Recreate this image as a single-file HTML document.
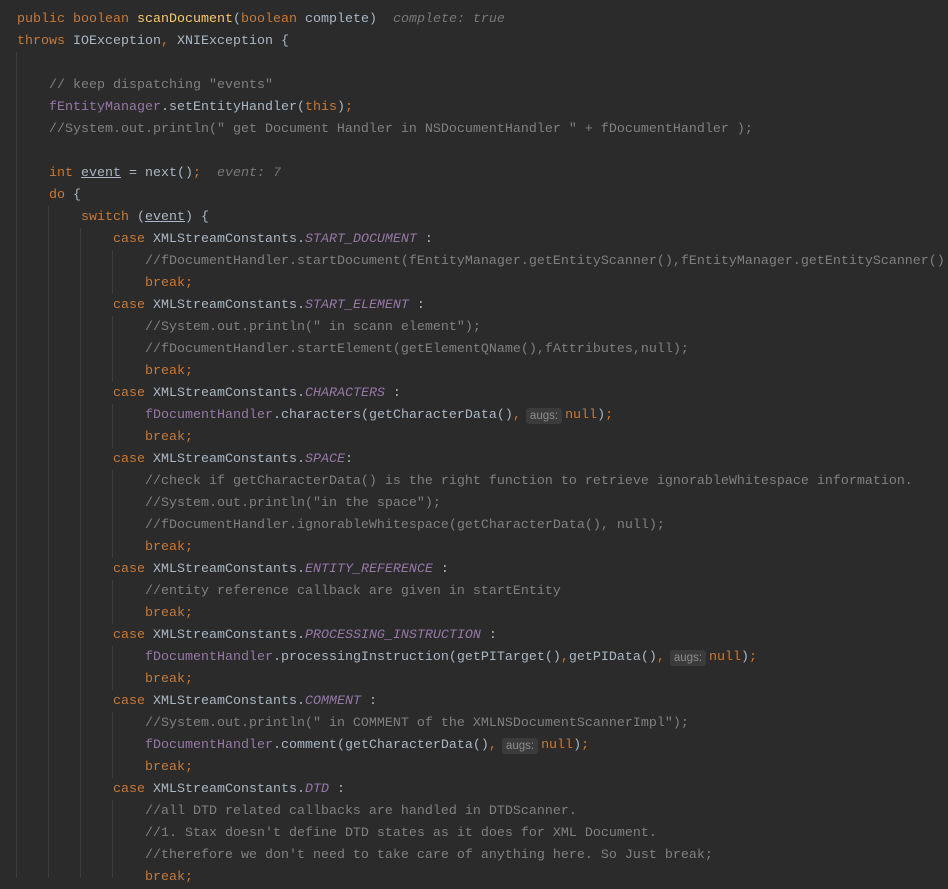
<!DOCTYPE html>
<html><head><meta charset="utf-8"><style>
html,body{margin:0;padding:0;background:#2b2b2b;width:948px;height:878px;overflow:hidden}
#c{position:absolute;left:17px;top:9px;font-family:"Liberation Mono",monospace;font-size:13.33px;line-height:22px;color:#a9b7c6;white-space:pre}
.k{color:#cc7832}.m{color:#ffc66d}.f{color:#9876aa}.fi{color:#9876aa;font-style:italic}.c{color:#808080}
.h{color:#787878;font-style:italic}.u{text-decoration:underline}
.a{display:inline-block;line-height:16px;height:16px;vertical-align:top;margin-top:3px;background:#3b3b3b;color:#8c8c8c;font-family:"Liberation Sans",sans-serif;font-size:11.5px;border-radius:3px;padding:0 4px;margin-left:5px;margin-right:3px}
.g{position:absolute;width:1px;background:#3c3c3c}
</style></head><body>
<div class="g" style="left:16px;top:52px;height:826px"></div>
<div class="g" style="left:48px;top:206px;height:672px"></div>
<div class="g" style="left:80px;top:228px;height:650px"></div>
<div class="g" style="left:112px;top:250px;height:44px"></div>
<div class="g" style="left:112px;top:316px;height:66px"></div>
<div class="g" style="left:112px;top:404px;height:44px"></div>
<div class="g" style="left:112px;top:470px;height:88px"></div>
<div class="g" style="left:112px;top:580px;height:44px"></div>
<div class="g" style="left:112px;top:646px;height:44px"></div>
<div class="g" style="left:112px;top:712px;height:66px"></div>
<div class="g" style="left:112px;top:800px;height:78px"></div>
<div id="c"><span class="k">public boolean </span><span class="m">scanDocument</span>(<span class="k">boolean </span>complete)  <span class="h">complete: true</span>
<span class="k">throws </span>IOException<span class="k">, </span>XNIException {

    <span class="c">// keep dispatching "events"</span>
    <span class="f">fEntityManager</span>.setEntityHandler(<span class="k">this</span>)<span class="k">;</span>
    <span class="c">//System.out.println(" get Document Handler in NSDocumentHandler " + fDocumentHandler );</span>

    <span class="k">int </span><span class="u">event</span> = next()<span class="k">;</span>  <span class="h">event: 7</span>
    <span class="k">do </span>{
        <span class="k">switch </span>(<span class="u">event</span>) {
            <span class="k">case </span>XMLStreamConstants.<span class="fi">START_DOCUMENT</span> :
                <span class="c">//fDocumentHandler.startDocument(fEntityManager.getEntityScanner(),fEntityManager.getEntityScanner().</span>
                <span class="k">break;</span>
            <span class="k">case </span>XMLStreamConstants.<span class="fi">START_ELEMENT</span> :
                <span class="c">//System.out.println(" in scann element");</span>
                <span class="c">//fDocumentHandler.startElement(getElementQName(),fAttributes,null);</span>
                <span class="k">break;</span>
            <span class="k">case </span>XMLStreamConstants.<span class="fi">CHARACTERS</span> :
                <span class="f">fDocumentHandler</span>.characters(getCharacterData()<span class="k">,</span><span class="a">augs:</span><span class="k">null</span>)<span class="k">;</span>
                <span class="k">break;</span>
            <span class="k">case </span>XMLStreamConstants.<span class="fi">SPACE</span>:
                <span class="c">//check if getCharacterData() is the right function to retrieve ignorableWhitespace information.</span>
                <span class="c">//System.out.println("in the space");</span>
                <span class="c">//fDocumentHandler.ignorableWhitespace(getCharacterData(), null);</span>
                <span class="k">break;</span>
            <span class="k">case </span>XMLStreamConstants.<span class="fi">ENTITY_REFERENCE</span> :
                <span class="c">//entity reference callback are given in startEntity</span>
                <span class="k">break;</span>
            <span class="k">case </span>XMLStreamConstants.<span class="fi">PROCESSING_INSTRUCTION</span> :
                <span class="f">fDocumentHandler</span>.processingInstruction(getPITarget()<span class="k">,</span>getPIData()<span class="k">,</span><span class="a">augs:</span><span class="k">null</span>)<span class="k">;</span>
                <span class="k">break;</span>
            <span class="k">case </span>XMLStreamConstants.<span class="fi">COMMENT</span> :
                <span class="c">//System.out.println(" in COMMENT of the XMLNSDocumentScannerImpl");</span>
                <span class="f">fDocumentHandler</span>.comment(getCharacterData()<span class="k">,</span><span class="a">augs:</span><span class="k">null</span>)<span class="k">;</span>
                <span class="k">break;</span>
            <span class="k">case </span>XMLStreamConstants.<span class="fi">DTD</span> :
                <span class="c">//all DTD related callbacks are handled in DTDScanner.</span>
                <span class="c">//1. Stax doesn't define DTD states as it does for XML Document.</span>
                <span class="c">//therefore we don't need to take care of anything here. So Just break;</span>
                <span class="k">break;</span>
</div>
</body></html>
